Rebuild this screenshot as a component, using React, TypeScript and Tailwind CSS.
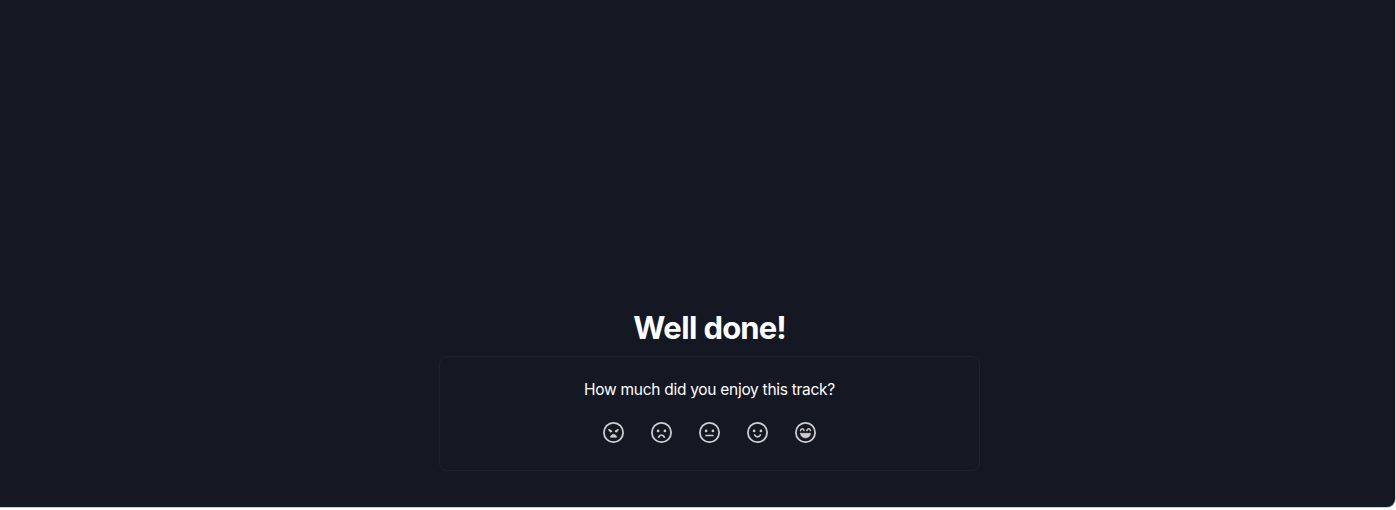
import type { ReactNode } from "react";

type Mood = { label: string; face: ReactNode };

const dotEyes = (
  <>
    <circle cx="8.6" cy="10.4" r="1.35" fill="currentColor" stroke="none" />
    <circle cx="15.4" cy="10.4" r="1.35" fill="currentColor" stroke="none" />
  </>
);

const moods: Mood[] = [
  {
    label: "Terrible",
    face: (
      <>
        <path d="M7.4 9.3L9.9 10.8M16.6 9.3L14.1 10.8" strokeWidth="1.6" />
        <circle cx="9" cy="11" r="1" fill="currentColor" stroke="none" />
        <circle cx="15" cy="11" r="1" fill="currentColor" stroke="none" />
        <path d="M9 16.4C9.4 14.7 10.5 13.9 12 13.9S14.6 14.7 15 16.4Z" fill="currentColor" strokeWidth="0.8" />
      </>
    ),
  },
  {
    label: "Bad",
    face: (
      <>
        {dotEyes}
        <path d="M9.2 16.6C9.8 15.1 10.8 14.5 12 14.5S14.2 15.1 14.8 16.6" />
      </>
    ),
  },
  {
    label: "Okay",
    face: (
      <>
        {dotEyes}
        <path d="M8.6 15H15.4" />
      </>
    ),
  },
  {
    label: "Good",
    face: (
      <>
        {dotEyes}
        <path d="M9.2 14.5C9.8 15.8 10.8 16.3 12 16.3S14.2 15.8 14.8 14.5" />
      </>
    ),
  },
  {
    label: "Great",
    face: (
      <>
        <path d="M7 10.1C7.2 8.8 7.9 8.2 8.8 8.2S10.4 8.8 10.6 10.1M13.4 10.1C13.6 8.8 14.3 8.2 15.2 8.2S16.8 8.8 17 10.1" strokeWidth="1.5" />
        <path d="M6.9 12.8H17.1C16.8 15.9 14.8 17.4 12 17.4S7.2 15.9 6.9 12.8Z" fill="currentColor" strokeWidth="0.6" />
      </>
    ),
  },
];

function MoodButton({ label, face }: Mood) {
  return (
    <button type="button" aria-label={label} className="flex size-6 items-center justify-center text-[#cdcdd0]">
      <svg className="size-6" viewBox="-0.5 -0.5 24 24" fill="none" stroke="currentColor" strokeWidth="1.7" strokeLinecap="round" strokeLinejoin="round">
        <circle cx="12" cy="12" r="9.6" strokeWidth="1.8" />
        {face}
      </svg>
    </button>
  );
}

export default function App() {
  return (
    <div className="h-[510px] bg-white pr-px font-['Inter','Liberation_Sans',sans-serif]">
      <main className="flex h-[507px] flex-col items-center rounded-br-lg bg-[#141823] pl-[23px] pt-[308px] text-white shadow-[0_0_0_1px_#cbd0d8]">
        <h1 className="h-10 pl-px text-[31px] font-bold leading-[39px] tracking-[-0.8px]">
          <span className="tracking-[-0.5px]">Well</span> <span className="tracking-[-0.9px]">done!</span>
        </h1>
        <section className="mt-2 flex h-[115px] w-[541px] flex-col items-center rounded-lg border border-[#1e222d] pt-[21px]">
          <p className="h-6 pl-px text-[15.5px] leading-6 tracking-[-0.28px]">How much did you enjoy this track?</p>
          <div className="mt-[18px] flex gap-6">
            {moods.map((mood) => (
              <MoodButton key={mood.label} {...mood} />
            ))}
          </div>
        </section>
      </main>
    </div>
  );
}
